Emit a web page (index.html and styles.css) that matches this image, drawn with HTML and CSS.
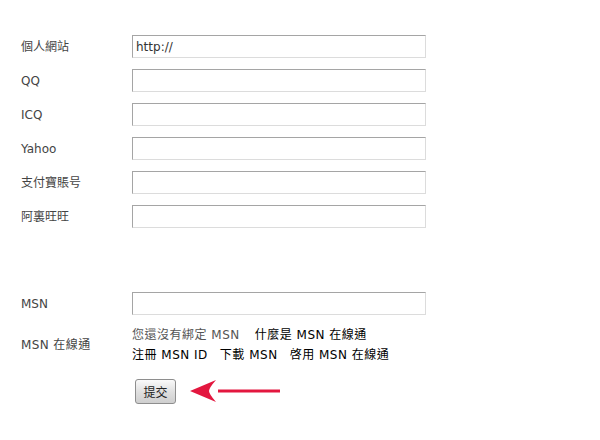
FILE: index.html
```html
<!DOCTYPE html>
<html>
<head>
<meta charset="utf-8">
<link rel="stylesheet" href="styles.css">
</head>
<body>
<form class="profile">
  <div class="row"><label class="lbl">個人網站</label><input class="field" type="text" value="http://"></div>
  <div class="row"><label class="lbl">QQ</label><input class="field" type="text"></div>
  <div class="row"><label class="lbl">ICQ</label><input class="field" type="text"></div>
  <div class="row"><label class="lbl">Yahoo</label><input class="field" type="text"></div>
  <div class="row"><label class="lbl">支付寶賬号</label><input class="field" type="text"></div>
  <div class="row"><label class="lbl">阿裏旺旺</label><input class="field" type="text"></div>
  <div class="row row-msn"><label class="lbl">MSN</label><input class="field" type="text"></div>
  <div class="row row-online">
    <label class="lbl wide">MSN 在線通</label>
    <div class="online">
      <div class="line"><span class="muted">您還沒有綁定 MSN</span><a class="lnk">什麼是 MSN 在線通</a></div>
      <div class="line"><a class="lnk">注冊 MSN ID</a><a class="lnk">下載 MSN</a><a class="lnk">啓用 MSN 在線通</a></div>
    </div>
  </div>
  <div class="row row-submit">
    <span class="lbl"></span>
    <div class="submit-wrap">
      <button class="btn" type="button">提交</button>
      <svg class="arrow" width="92" height="26" viewBox="0 0 92 26">
        <path d="M28 11.5 H90 V14.5 H28 Z" fill="#e3173f"/>
        <path d="M0 13 L26 2 Q19 10 19 13 Q19 16 26 24 Z" fill="#e3173f"/>
      </svg>
    </div>
  </div>
</form>
</body>
</html>
```

FILE: styles.css
```css
html, body {
  margin: 0;
  padding: 0;
  background: #fff;
}
body {
  font-family: "DejaVu Sans", Verdana, "Noto Sans CJK TC", sans-serif;
  font-size: 12px;
  color: #444;
}
.profile {
  padding: 35px 0 0 21px;
  display: flex;
  flex-direction: column;
  gap: 11px;
}
.row {
  display: grid;
  grid-template-columns: 111px 294px;
  align-items: center;
}
.lbl {
  color: #444;
  line-height: 16px;
}
.lbl.wide {
  letter-spacing: 0.4px;
}
.field {
  box-sizing: border-box;
  width: 294px;
  height: 23px;
  margin: 0;
  padding: 0 3px;
  border: 1px solid;
  border-color: #a5a5a5 #dcdcdc #dcdcdc #a5a5a5;
  font-family: "DejaVu Sans", Verdana, sans-serif;
  font-size: 12px;
  color: #333;
  background: #fff;
  outline: none;
}
.row-msn {
  margin-top: 53px;
}
.row-online {
  margin-top: -1px;
}
.online {
  display: flex;
  flex-direction: column;
  letter-spacing: 0.5px;
}
.line {
  line-height: 20px;
  white-space: nowrap;
}
.muted {
  color: #555;
  margin-right: 15px;
}
.lnk {
  color: #000;
  margin-right: 12px;
}
.row-submit {
  margin-top: 2px;
}
.submit-wrap {
  display: flex;
  align-items: center;
  padding-left: 3px;
}
.btn {
  box-sizing: border-box;
  width: 41px;
  height: 25px;
  padding: 0;
  border: 1px solid #8e8e8e;
  border-radius: 3px;
  background: linear-gradient(#fafafa, #dedede 55%, #cfcfcf);
  font-family: "DejaVu Sans", "Noto Sans CJK TC", sans-serif;
  font-size: 12px;
  color: #222;
}
.arrow {
  display: block;
  margin-left: 14px;
}
```
